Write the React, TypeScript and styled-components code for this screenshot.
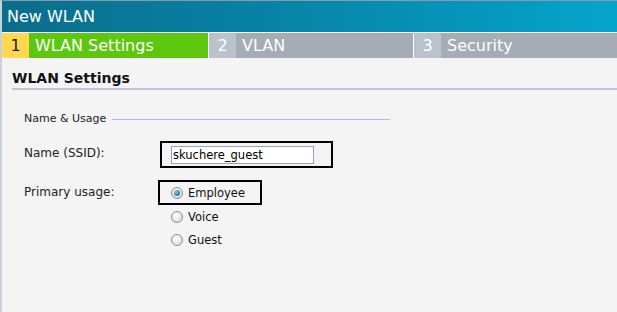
import React from 'react'
import styled, { createGlobalStyle } from 'styled-components'

const GlobalStyle = createGlobalStyle`
  html, body {
    margin: 0;
    padding: 0;
    background: #f4f4f4;
  }
  body {
    font-family: "DejaVu Sans", Verdana, sans-serif;
  }
`

const Window = styled.div`
  width: 617px;
  height: 312px;
  box-sizing: border-box;
  border-top: 1px solid #8a9aa6;
  border-left: 2px solid #c9d2d8;
  position: relative;
  display: flex;
  flex-direction: column;
  background: #f4f4f4;
  overflow: hidden;
  &::before {
    content: '';
    position: absolute;
    left: -1px;
    top: 58px;
    bottom: 0;
    width: 1px;
    background: #8c8c8c;
  }
`

const TitleBar = styled.div`
  height: 31px;
  background: linear-gradient(to right, #0a6d8b, #0789ae 55%, #05a4cb);
  color: #ffffff;
  font-size: 16px;
  display: flex;
  align-items: center;
  padding-left: 5px;
  border-bottom: 1px solid #ffffff;
`

const Steps = styled.div`
  display: flex;
  height: 25px;
`

const Step = styled.div<{ $active?: boolean; $w?: number }>`
  display: flex;
  width: ${(p) => p.$w}px;
  flex: ${(p) => (p.$w ? 'none' : '1')};
  border-right: 1px solid #ffffff;
  background: ${(p) => (p.$active ? '#5cc70c' : '#a4adb6')};
  color: #ffffff;
  font-size: 16px;
  &:last-child {
    border-right: none;
  }
`

const StepNum = styled.div<{ $active?: boolean }>`
  width: 27px;
  display: flex;
  align-items: center;
  justify-content: center;
  background: ${(p) => (p.$active ? '#ffd84f' : '#bac2cc')};
  color: ${(p) => (p.$active ? '#222222' : '#ffffff')};
`

const StepLabel = styled.div`
  display: flex;
  align-items: center;
  padding-left: 6px;
`

const Heading = styled.div`
  margin: 0 0 0 10px;
  padding: 12px 0 2px 0;
  font-size: 14px;
  line-height: 16px;
  font-weight: bold;
  color: #111111;
  border-bottom: 2px solid #bac6d4;
`

const Fieldset = styled.div`
  width: 366px;
  margin-left: 22px;
  display: flex;
  flex-direction: column;
`

const Legend = styled.div`
  display: flex;
  align-items: center;
  gap: 6px;
  margin-top: 22px;
  font-size: 11px;
  line-height: 14px;
  color: #222222;
  &::after {
    content: '';
    flex: 1;
    height: 1px;
    background: #b6c0cc;
  }
`

const Row = styled.div<{ $gap: number }>`
  display: flex;
  align-items: flex-start;
  margin-top: ${(p) => p.$gap}px;
`

const Label = styled.div<{ $top: number }>`
  width: 136px;
  font-size: 12px;
  line-height: 14px;
  color: #222222;
  padding-top: ${(p) => p.$top}px;
`

const Highlight = styled.div<{ $w: number; $h: number; $pad: number }>`
  width: ${(p) => p.$w}px;
  height: ${(p) => p.$h}px;
  box-sizing: border-box;
  border: 2px solid #000000;
  display: flex;
  align-items: center;
  padding-left: ${(p) => p.$pad}px;
`

const TextInput = styled.div`
  width: 143px;
  height: 18px;
  box-sizing: border-box;
  border: 1px solid #8ea6bf;
  background: #ffffff;
  font-size: 11.5px;
  color: #000000;
  display: flex;
  align-items: center;
  padding-left: 1px;
`

const Radios = styled.div`
  display: flex;
  flex-direction: column;
  margin-left: -2px;
`

const RadioList = styled.div`
  padding-left: 13px;
`

const RadioRow = styled.div`
  display: flex;
  align-items: center;
  gap: 5px;
  height: 23px;
  font-size: 11.5px;
  color: #111111;
`

const RadioDot = styled.span<{ $on?: boolean }>`
  width: 12px;
  height: 12px;
  border-radius: 50%;
  box-sizing: border-box;
  border: 1px solid #8c8c8c;
  background: radial-gradient(circle at 40% 35%, #ffffff, #d4d4d4);
  display: flex;
  align-items: center;
  justify-content: center;
  &::after {
    content: '';
    display: ${(p) => (p.$on ? 'block' : 'none')};
    width: 6px;
    height: 6px;
    border-radius: 50%;
    background: radial-gradient(circle at 35% 35%, #7ccbf2, #0a4f8a);
  }
`

function Radio({ label, on }: { label: string; on?: boolean }) {
  return (
    <RadioRow>
      <RadioDot $on={on} />
      {label}
    </RadioRow>
  )
}

export default function App() {
  return (
    <>
      <GlobalStyle />
      <Window>
        <TitleBar>New WLAN</TitleBar>
        <Steps>
          <Step $active $w={206}>
            <StepNum $active>1</StepNum>
            <StepLabel>WLAN Settings</StepLabel>
          </Step>
          <Step $w={204}>
            <StepNum>2</StepNum>
            <StepLabel>VLAN</StepLabel>
          </Step>
          <Step>
            <StepNum>3</StepNum>
            <StepLabel>Security</StepLabel>
          </Step>
        </Steps>
        <Heading>WLAN Settings</Heading>
        <Fieldset>
          <Legend>Name &amp; Usage</Legend>
          <Row $gap={15}>
            <Label $top={5}>Name (SSID):</Label>
            <Highlight $w={173} $h={27} $pad={9}>
              <TextInput>skuchere_guest</TextInput>
            </Highlight>
          </Row>
          <Row $gap={12}>
            <Label $top={5}>Primary usage:</Label>
            <Radios>
              <Highlight $w={104} $h={25} $pad={11}>
                <Radio label="Employee" on />
              </Highlight>
              <RadioList>
                <Radio label="Voice" />
                <Radio label="Guest" />
              </RadioList>
            </Radios>
          </Row>
        </Fieldset>
      </Window>
    </>
  )
}
